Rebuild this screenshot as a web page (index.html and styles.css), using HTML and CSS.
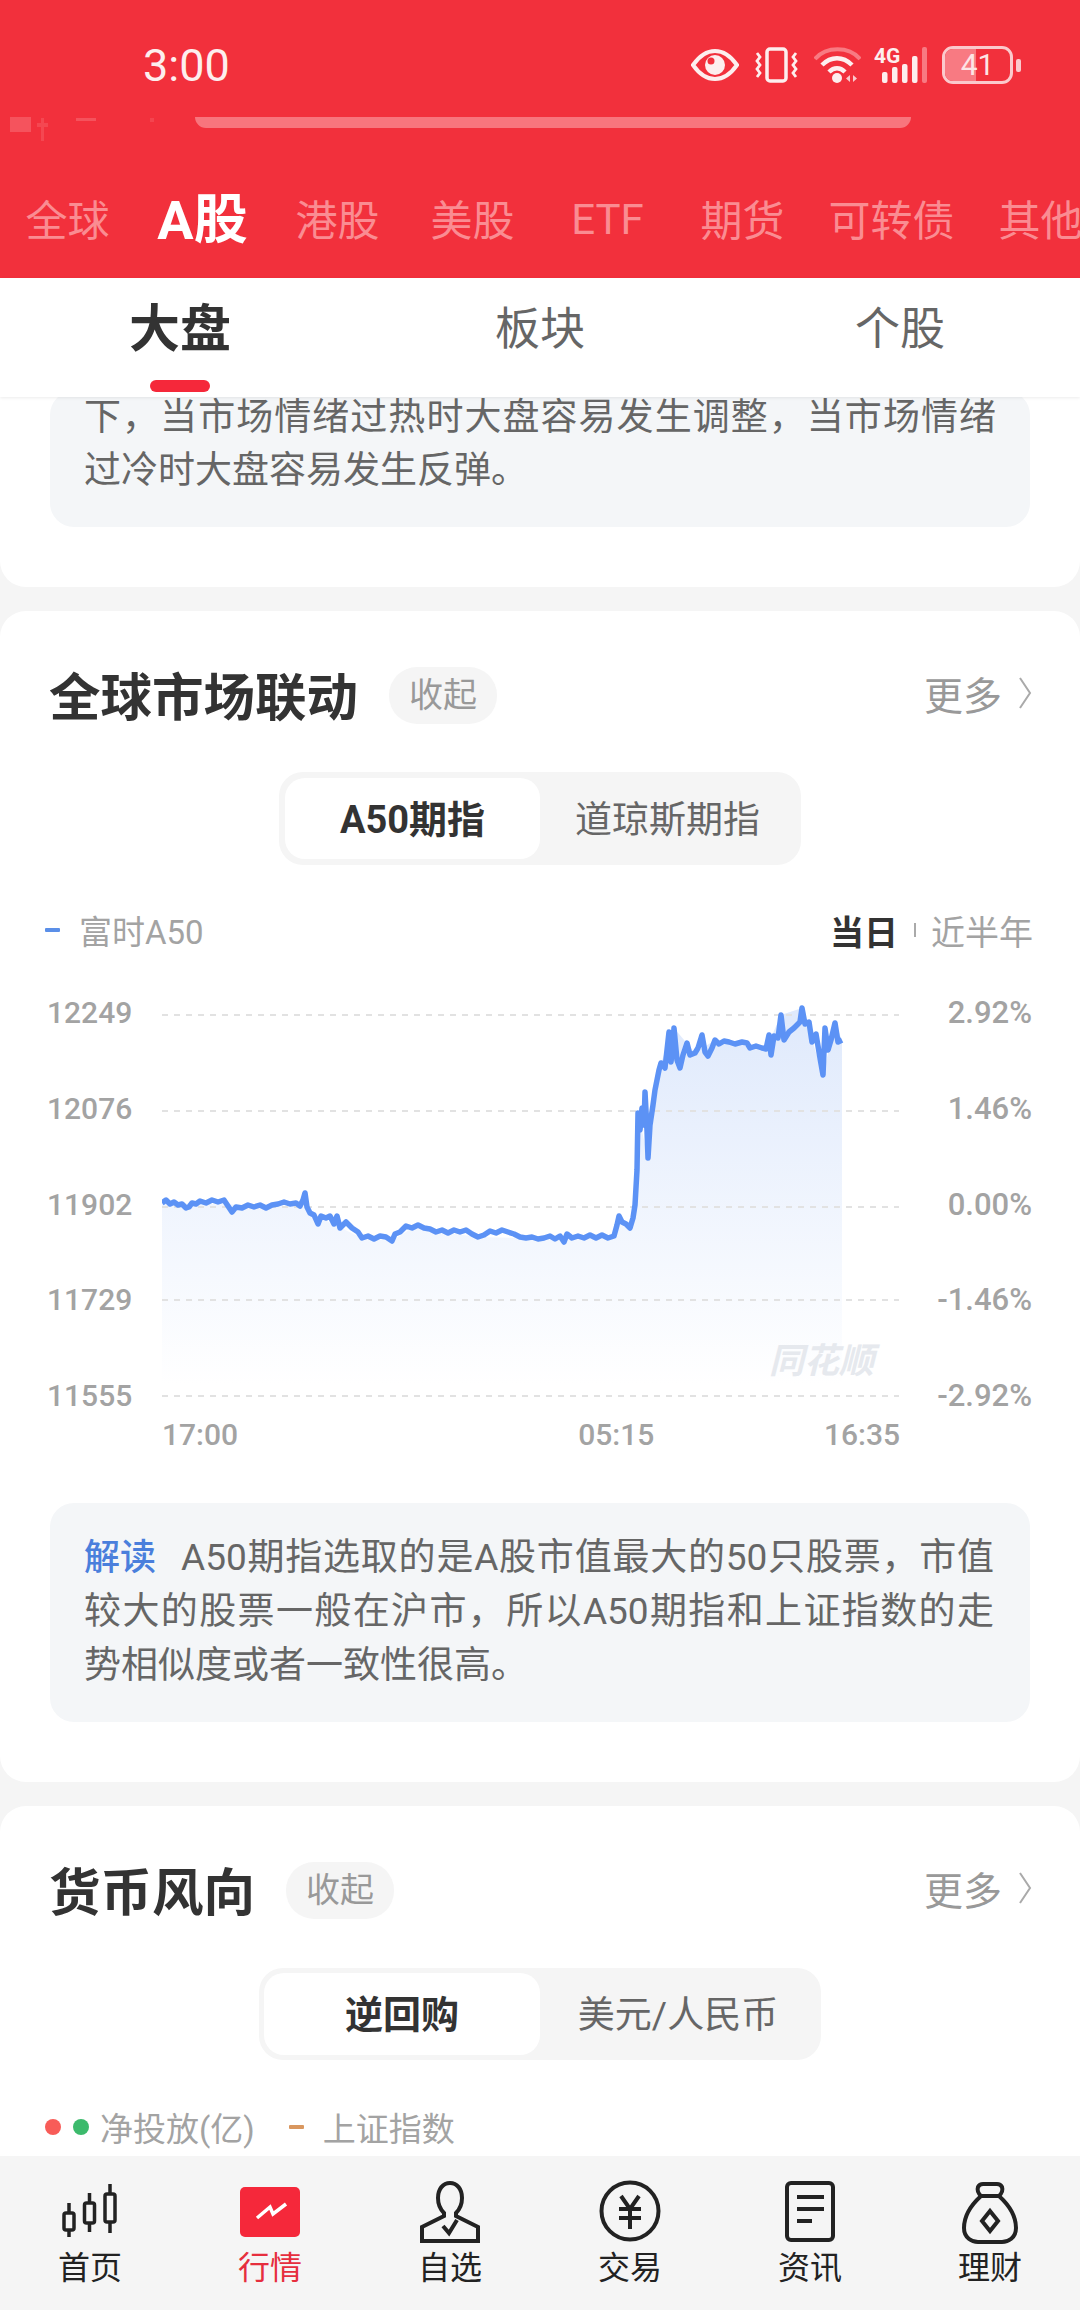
FILE: index.html
```html
<!DOCTYPE html>
<html lang="zh-CN">
<head>
  <meta charset="UTF-8" />
  <meta name="viewport" content="width=device-width, initial-scale=1.0"/>
  <title>行情 — 大盘</title>
  <link rel="stylesheet" href="styles.css">
</head>
<body>
<div class="page">

  <div class="top">
    <div class="status">
      <span class="time">3:00</span>
      <div class="status-icons">
        <svg class="ic-eye" width="48" height="32" viewBox="0 0 48 32">
          <path d="M2 16C9 6 16 2 24 2s15 4 22 14c-7 10-14 14-22 14S9 26 2 16z" fill="none" stroke="#fdeeee" stroke-width="4"/>
          <circle cx="24" cy="16" r="10" fill="#fdeeee"/>
          <circle cx="20" cy="12" r="3.500" fill="#f2303c"/>
        </svg>
        <svg class="ic-vib" width="45" height="36" viewBox="0 0 45 36">
          <rect x="13" y="2" width="19" height="32" rx="3" fill="none" stroke="#fdeeee" stroke-width="3.500"/>
          <path d="M3 6l3 4-3 4 3 4-3 4 3 4-3 4M42 6l-3 4 3 4-3 4 3 4-3 4 3 4" fill="none" stroke="#fdeeee" stroke-width="2.800"/>
        </svg>
        <svg class="ic-wifi" width="47" height="36" viewBox="0 0 47 36">
          <path d="M1 12C12 -1 35 -1 46 12" fill="none" stroke="#f87a82" stroke-width="4"/>
          <path d="M8 18c9-9 21-9 30 0M15 25c5-5 11-5 16 0" fill="none" stroke="#fdeeee" stroke-width="4.500"/>
          <circle cx="23" cy="31" r="5" fill="#fdeeee"/>
          <path d="M36 28v7l-4-3.500zM39 28v7l4-3.500z" fill="#fbc9cc"/>
        </svg>
        <svg class="ic-signal" width="53" height="36" viewBox="0 0 53 36">
          <text x="0" y="16" class="ic-4g">4G</text>
          <rect x="8" y="25" width="5.500" height="11" rx="2" fill="#fdeeee"/>
          <rect x="18" y="20" width="5.500" height="16" rx="2" fill="#fdeeee"/>
          <rect x="28" y="17" width="5.500" height="19" rx="2" fill="#fdeeee"/>
          <rect x="38" y="9" width="5.500" height="27" rx="2" fill="#fdeeee"/>
          <rect x="48" y="0" width="5" height="36" rx="2" fill="#f87a82"/>
        </svg>
        <div class="battery">
          <div class="battery-body">
            <div class="battery-fill"></div>
            <span class="battery-num">41</span>
          </div>
          <div class="battery-nub"></div>
        </div>
      </div>
    </div>

    <div class="peek">
      <svg class="peek-candles" width="40" height="24" viewBox="0 0 40 24">
        <rect x="0" y="0" width="21" height="15" fill="#f87078"/>
        <rect x="31" y="1" width="3" height="23" fill="#f65a63"/>
        <rect x="27" y="6" width="11" height="4" fill="#f65a63"/>
      </svg>
      <div class="peek-dash"></div>
      <div class="peek-dot"></div>
      <div class="peek-bar"></div>
    </div>

    <div class="market-tabs">
      <span class="mtab">全球</span>
      <span class="mtab on">A股</span>
      <span class="mtab">港股</span>
      <span class="mtab">美股</span>
      <span class="mtab latin">ETF</span>
      <span class="mtab">期货</span>
      <span class="mtab wide">可转债</span>
      <span class="mtab">其他</span>
    </div>
  </div>

  <div class="sub-tabs">
    <div class="stab on">大盘</div>
    <div class="stab">板块</div>
    <div class="stab">个股</div>
  </div>

  <div class="main">

    <div class="card card-first">
      <div class="note note-cut">下，当市场情绪过热时大盘容易发生调整，当市场情绪过冷时大盘容易发生反弹。</div>
    </div>

    <div class="card">
      <div class="card-head">
        <h2>全球市场联动</h2>
        <span class="pill">收起</span>
        <span class="more">更多<svg width="14" height="32" viewBox="0 0 14 32"><path d="M2 1l10 15L2 31" fill="none" stroke="#aaa" stroke-width="2"/></svg></span>
      </div>

      <div class="seg-wrap">
        <div class="seg">
          <div class="seg-item on">A50期指</div>
          <div class="seg-item">道琼斯期指</div>
        </div>
      </div>

      <div class="legend">
        <span class="dash dash-blue"></span>
        <span class="legend-text">富时A50</span>
        <div class="range">
          <b>当日</b><i></i><span>近半年</span>
        </div>
      </div>

      <div class="chart">
        <div class="axis">
          <span>12249</span><span>12076</span><span>11902</span><span>11729</span><span>11555</span>
        </div>
        <div class="plot">
          <svg width="737" height="421" viewBox="0 -5 737 421">
            <defs>
              <linearGradient id="area" gradientUnits="userSpaceOnUse" x1="0" y1="20" x2="0" y2="385">
                <stop offset="0" stop-color="#e0eafc"/>
                <stop offset="1" stop-color="#ffffff"/>
              </linearGradient>
            </defs>
            <path fill="url(#area)" d="M0 203 L138 206 143 193 148 213 200 238 230 241 250 228 316 237 364 238 452 236 457 216 468 228 473 205 476 113 486 158 499 63 512 28 533 53 553 40 604 49 619 15 640 8 661 75 673 23 680 40 L680 400 0 400Z"/>
            <g class="grid">
              <line x1="0" y1="15" x2="737" y2="15"/>
              <line x1="0" y1="111" x2="737" y2="111"/>
              <line x1="0" y1="207" x2="737" y2="207"/>
              <line x1="0" y1="300" x2="737" y2="300"/>
              <line x1="0" y1="396" x2="737" y2="396"/>
            </g>
            <polyline class="price" points="0,203 4,200 8,204 12,202 16,205 20,204 24,208 27,207 30,203 34,204 38,201 44,203 50,200 56,202 62,200 66,206 70,212 74,207 80,208 86,205 92,207 98,205 104,208 110,205 116,204 122,202 128,204 134,203 138,206 141,200 143,193 145,207 148,213 152,215 156,224 159,216 164,218 168,216 172,224 175,216 178,228 184,222 190,228 196,232 200,238 206,236 212,239 218,236 224,237 230,241 233,234 238,232 244,226 250,228 256,225 262,228 268,229 274,232 280,230 286,233 292,230 298,232 304,230 310,234 316,237 322,235 328,231 334,233 340,230 346,232 352,234 358,237 364,238 370,237 376,239 382,238 388,236 393,239 398,236 402,242 405,234 410,238 416,236 422,238 428,235 434,238 440,235 446,238 452,236 455,225 457,216 460,222 464,224 468,228 471,218 473,205 475,170 476,113 478,130 480,108 482,125 483,92 485,130 486,158 488,125 491,105 493,90 497,70 499,63 503,68 505,50 507,32 509,62 511,45 512,28 515,60 518,68 521,55 525,43 528,55 533,53 536,48 540,35 543,52 546,56 550,48 553,40 557,44 562,41 567,42 573,44 580,42 585,43 588,48 594,46 600,48 604,49 607,35 609,55 612,36 616,38 619,15 622,40 627,32 632,28 638,22 640,8 643,24 647,22 650,42 654,34 658,58 661,75 663,28 666,50 669,40 673,23 676,42 680,40"/>
          </svg>
          <span class="watermark">同花顺</span>
        </div>
        <div class="axis axis-right">
          <span>2.92%</span><span>1.46%</span><span>0.00%</span><span>-1.46%</span><span>-2.92%</span>
        </div>
      </div>

      <div class="times">
        <span>17:00</span><span class="time-mid">05:15</span><span class="time-end">16:35</span>
      </div>

      <div class="note note-read"><span class="read-tag">解读</span>A50期指选取的是A股市值最大的50只股票，市值较大的股票一般在沪市，所以A50期指和上证指数的走势相似度或者一致性很高。</div>
    </div>

    <div class="card card-last">
      <div class="card-head">
        <h2>货币风向</h2>
        <span class="pill">收起</span>
        <span class="more">更多<svg width="14" height="32" viewBox="0 0 14 32"><path d="M2 1l10 15L2 31" fill="none" stroke="#aaa" stroke-width="2"/></svg></span>
      </div>

      <div class="seg-wrap">
        <div class="seg seg-big">
          <div class="seg-item on">逆回购</div>
          <div class="seg-item">美元/人民币</div>
        </div>
      </div>

      <div class="legend">
        <span class="dot dot-red"></span>
        <span class="dot dot-green"></span>
        <span class="legend-text">净投放(亿)</span>
        <span class="dash dash-orange"></span>
        <span class="legend-text">上证指数</span>
      </div>
    </div>
  </div>

  <div class="nav">
    <div class="nav-item">
      <svg width="64" height="64" viewBox="0 0 64 64" fill="none" stroke="#222" stroke-width="3.500">
        <path d="M11 23v34M31.500 13v39M52 4v49"/>
        <rect x="6" y="33" width="10" height="17" rx="2" fill="#f5f5f5"/>
        <rect x="26.500" y="23" width="10" height="20" rx="2" fill="#f5f5f5"/>
        <rect x="47" y="14" width="10" height="28" rx="2" fill="#f5f5f5"/>
      </svg>
      <span>首页</span>
    </div>
    <div class="nav-item on">
      <svg width="64" height="64" viewBox="0 0 64 64">
        <rect x="2" y="7" width="60" height="50" rx="5" fill="#f5283a"/>
        <path d="M19 38L32 27l3 7 13-10" fill="none" stroke="#fff" stroke-width="3.500"/>
      </svg>
      <span>行情</span>
    </div>
    <div class="nav-item">
      <svg width="64" height="64" viewBox="0 0 64 64" fill="none" stroke="#222" stroke-width="4">
        <path d="M32 3c-7 0-12 6-12 15 0 7 3 12 6 15v3L4 47v14h56V47L38 36v-3c3-3 6-8 6-15 0-9-5-15-12-15z"/>
        <path d="M25 46l6 7 8-13"/>
      </svg>
      <span>自选</span>
    </div>
    <div class="nav-item">
      <svg width="64" height="64" viewBox="0 0 64 64" fill="none" stroke="#222" stroke-width="4">
        <circle cx="32" cy="31" r="28.500"/>
        <path d="M23 16l9 13 9-13M32 29v20M21 29h22M21 38h22"/>
      </svg>
      <span>交易</span>
    </div>
    <div class="nav-item">
      <svg width="64" height="64" viewBox="0 0 64 64" fill="none" stroke="#222" stroke-width="4">
        <rect x="9" y="3" width="46" height="57" rx="4"/>
        <path d="M19 17h27M19 29h27M19 41h15"/>
      </svg>
      <span>资讯</span>
    </div>
    <div class="nav-item">
      <svg width="64" height="64" viewBox="0 0 64 64" fill="none" stroke="#222" stroke-width="4">
        <path d="M23 16c-3-3-4-6-3-9 1-2 3-3 5-3h14c2 0 4 1 5 3 1 3 0 6-3 9z"/>
        <path d="M23 16C12 26 6 38 6 48c0 10 8 14 14 14h24c6 0 14-4 14-14 0-10-6-22-17-32"/>
        <path d="M32 31l8 10-8 10-8-10z"/>
      </svg>
      <span>理财</span>
    </div>
  </div>

</div>
</body>
</html>
```

FILE: styles.css
```css
* {
  box-sizing: border-box;
}

body {
  margin: 0;
  font-family: Roboto, "Noto Sans CJK SC", sans-serif;
  background-color: #f5f5f5;
  color: #333;
}

.page {
  width: 1080px;
  height: 2310px;
  display: flex;
  flex-direction: column;
  overflow: hidden;
}

/* red header */
.top {
  height: 278px;
  background-color: #f2303c;
  flex-shrink: 0;
}

.status {
  height: 110px;
  padding: 20px 59px 0 143px;
  display: flex;
  justify-content: space-between;
  align-items: center;
}

.time {
  font-size: 45px;
  color: #fdeeee;
}

.status-icons {
  display: flex;
  align-items: center;
  gap: 15px;
}

.ic-wifi {
  margin-right: -2px;
}

.ic-4g {
  font-family: Roboto, sans-serif;
  font-size: 21px;
  font-weight: 700;
  fill: #fdeeee;
}

.battery {
  display: flex;
  align-items: center;
  gap: 3px;
}

.battery-body {
  position: relative;
  width: 71px;
  height: 38px;
  border: 3px solid #fbc9cc;
  border-radius: 11px;
  overflow: hidden;
  text-align: center;
}

.battery-fill {
  position: absolute;
  top: 0;
  left: 0;
  bottom: 0;
  width: 48%;
  background-color: #f87a82;
}

.battery-num {
  position: relative;
  font-size: 30px;
  line-height: 32px;
  color: #fde4e5;
}

.battery-nub {
  width: 5px;
  height: 13px;
  border-radius: 2px;
  background-color: #fbc9cc;
}

.peek {
  height: 40px;
  padding: 7px 0 0 10px;
  display: flex;
  align-items: flex-start;
}

.peek-candles {
  opacity: 0.55;
}

.peek-dash {
  width: 20px;
  height: 3px;
  margin: 1px 0 0 26px;
  background-color: #f5525c;
}

.peek-dot {
  width: 4px;
  height: 4px;
  margin: 1px 0 0 54px;
  background-color: #f4444f;
}

.peek-bar {
  width: 716px;
  height: 11px;
  margin-left: 41px;
  background-color: #f8757d;
  border-radius: 0 0 12px 12px;
}

.market-tabs {
  height: 128px;
  padding-top: 6px;
  display: flex;
  align-items: center;
}

.mtab {
  width: 135px;
  flex-shrink: 0;
  text-align: center;
  font-size: 42px;
  color: #fa8c92;
}

.mtab.wide {
  width: 163px;
}

.mtab.latin {
  padding-top: 4px;
}

.mtab.on {
  margin-top: -4px;
  font-size: 54px;
  font-weight: 700;
  color: #fff;
}

/* white tab row */
.sub-tabs {
  position: relative;
  z-index: 2;
  height: 119px;
  flex-shrink: 0;
  display: grid;
  grid-template-columns: repeat(3, 1fr);
  background-color: #fff;
  box-shadow: 0 1px 3px rgba(0,0,0,0.08);
}

.stab {
  position: relative;
  text-align: center;
  font-size: 45px;
  line-height: 104px;
  color: #666;
}

.stab.on {
  font-size: 51px;
  font-weight: 700;
  color: #333;
}

.stab.on::after {
  content: "";
  position: absolute;
  left: 150px;
  bottom: 5px;
  width: 60px;
  height: 12px;
  border-radius: 6px;
  background-color: #f5283a;
}

/* scrolled content */
.main {
  flex: 1;
  min-height: 0;
  overflow: hidden;
  display: flex;
  flex-direction: column;
  gap: 24px;
}

.card {
  flex-shrink: 0;
  padding: 54px 48px 60px 50px;
  background-color: #fff;
  border-radius: 26px;
}

.card-first {
  padding-top: 0;
  padding-bottom: 60px;
  border-radius: 0 0 26px 26px;
}

.note {
  background-color: #f4f6f8;
  border-radius: 24px;
  padding: 28px 36px 29px 34px;
  margin-right: 2px;
  font-size: 37px;
  line-height: 54px;
  color: #666;
  text-align: justify;
}

.note-cut {
  margin-top: -6px;
  padding: 0 34px 30px;
  line-height: 53px;
}

.read-tag {
  display: inline-block;
  margin-right: 25px;
  font-size: 36px;
  font-weight: 500;
  color: #4a7fdc;
}

.card-head {
  height: 60px;
  display: flex;
  align-items: center;
}

.card-head h2 {
  margin: 0 0 4px -1px;
  font-size: 51.5px;
  font-weight: 700;
  color: #333;
}

.pill {
  margin-left: 31px;
  width: 108px;
  height: 57px;
  border-radius: 28px;
  background-color: #f5f5f5;
  font-size: 34px;
  line-height: 57px;
  text-align: center;
  color: #999;
}

.more {
  margin-left: auto;
  margin-bottom: 4px;
  display: flex;
  align-items: center;
  gap: 16px;
  font-size: 39px;
  color: #999;
}

.seg-wrap {
  margin: 47px -48px 0 -50px;
  display: flex;
  justify-content: center;
}

.seg {
  display: flex;
  padding: 6px;
  background-color: #f5f5f5;
  border-radius: 24px;
}

.seg-item {
  width: 255px;
  height: 81px;
  line-height: 85px;
  text-align: center;
  font-size: 37px;
  color: #666;
}

.seg-item.on {
  background-color: #fff;
  border-radius: 20px;
  font-size: 38px;
  font-weight: 700;
  color: #333;
}

.seg-big {
  padding: 5px;
}

.seg-big .seg-item {
  width: 276px;
  height: 82px;
}

.card-last .seg-wrap {
  margin-top: 48px;
}

.legend {
  margin: 45px 0 0 -5px;
  height: 40px;
  display: flex;
  align-items: center;
}

.card-last .legend {
  margin-top: 47px;
}

.legend-text {
  font-size: 33px;
  color: #a3a3a3;
}

.dash {
  width: 15px;
  height: 4px;
  margin-right: 19px;
  border-radius: 1px;
}

.dash-blue {
  background-color: #5b8fe8;
}

.dash-orange {
  margin-left: 34px;
  background-color: #d9975f;
}

.dot {
  width: 16px;
  height: 16px;
  border-radius: 50%;
  margin-right: 12px;
}

.dot-green {
  margin-right: 11px;
  background-color: #3cba6c;
}

.dot-red {
  background-color: #f85c58;
}

.range {
  margin-left: auto;
  margin-right: -1px;
  display: flex;
  align-items: center;
  font-size: 34px;
  color: #a3a3a3;
}

.range b {
  color: #333;
}

.range i {
  width: 2px;
  height: 14px;
  margin: 0 15px 0 16px;
  background-color: #aaa;
}

.chart {
  margin: 45px 0 0 -3px;
  display: flex;
  height: 421px;
}

.axis {
  width: 115px;
  margin-top: -2px;
  display: flex;
  flex-direction: column;
  justify-content: space-between;
  font-size: 30px;
  font-weight: 500;
  line-height: 40px;
  color: #a3a3a3;
}

.axis-right {
  width: 133px;
  margin-right: -1px;
  font-size: 31px;
  text-align: right;
}

.plot {
  position: relative;
  width: 737px;
  flex-shrink: 0;
}

.plot svg {
  display: block;
}

.grid line {
  stroke: #e2e2e2;
  stroke-width: 2;
  stroke-dasharray: 6 6;
}

.price {
  fill: none;
  stroke: #5c92f5;
  stroke-width: 5.5;
  stroke-linejoin: round;
}

.watermark {
  position: absolute;
  left: 607px;
  top: 337px;
  font-size: 35px;
  font-weight: 700;
  font-style: italic;
  color: #e6e9ee;
}

.times {
  margin-left: 112px;
  width: 738px;
  height: 38px;
  display: flex;
  font-size: 30px;
  font-weight: 500;
  line-height: 38px;
  color: #a3a3a3;
}

.time-mid {
  margin-left: 340px;
}

.time-end {
  margin-left: auto;
}

.note-read {
  margin-top: 49px;
}

/* bottom bar */
.nav {
  height: 154px;
  flex-shrink: 0;
  position: relative;
  z-index: 2;
  display: grid;
  grid-template-columns: repeat(6, 1fr);
  background-color: #f5f5f5;
}

.nav-item {
  padding-top: 24px;
  display: flex;
  flex-direction: column;
  align-items: center;
  font-size: 32px;
  line-height: 42px;
  color: #222;
}

.nav-item svg {
  display: block;
  margin-bottom: 3px;
}

.nav-item.on {
  color: #e62e3e;
}
```
